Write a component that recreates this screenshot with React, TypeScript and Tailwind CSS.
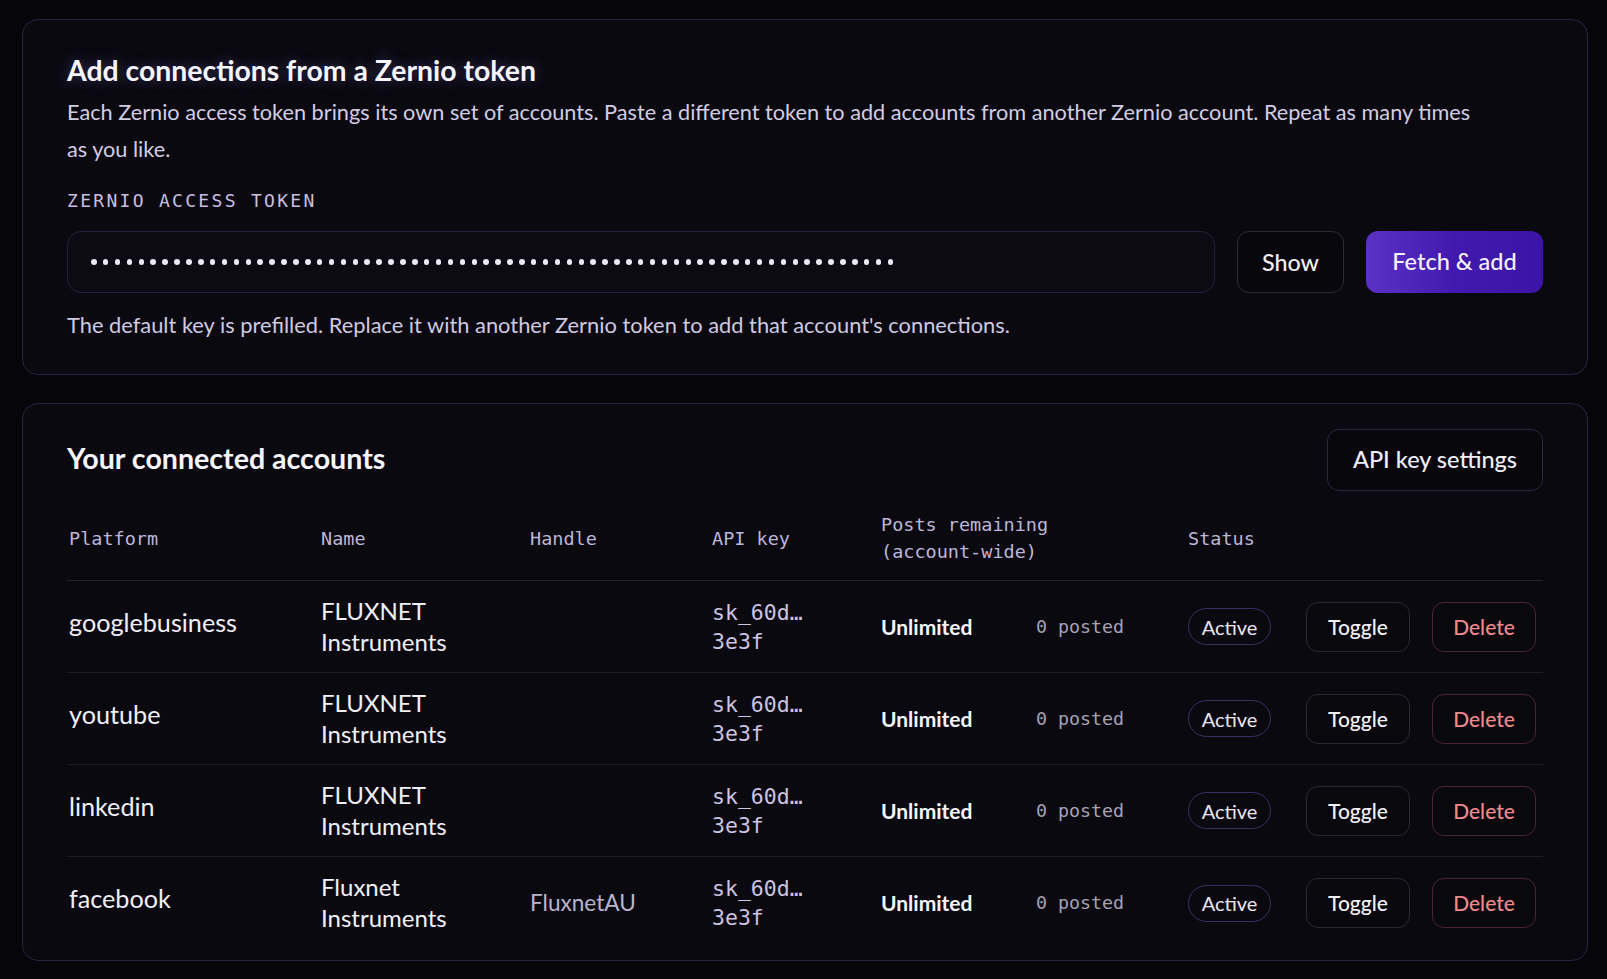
import React from "react";

const sans = "font-['Lato','Noto_Sans',sans-serif]";
const mono = "font-['DejaVu_Sans_Mono','Liberation_Mono',monospace]";

type Account = {
  platform: string;
  name: [string, string];
  handle: string;
};

const accounts: Account[] = [
  { platform: "googlebusiness", name: ["FLUXNET", "Instruments"], handle: "" },
  { platform: "youtube", name: ["FLUXNET", "Instruments"], handle: "" },
  { platform: "linkedin", name: ["FLUXNET", "Instruments"], handle: "" },
  { platform: "facebook", name: ["Fluxnet", "Instruments"], handle: "FluxnetAU" },
];

const cols = "grid grid-cols-[254px_209px_182px_169px_307px_118px_1fr]";

function MaskedToken() {
  return (
    <div className="flex items-center gap-[6.4px]">
      {Array.from({ length: 68 }).map((_, i) => (
        <span key={i} className="block h-[5.5px] w-[5.5px] rounded-full bg-[#ece9f4]" />
      ))}
    </div>
  );
}

function Row({ a, last }: { a: Account; last: boolean }) {
  return (
    <div
      className={`${cols} h-[92px] items-center ${last ? "" : "border-b border-[#1e1c27]"}`}
    >
      <div className={`${sans} mb-[8px] pl-[2px] text-[25.2px] text-[#f1eff7]`}>{a.platform}</div>
      <div className={`${sans} text-[24px] leading-[30.7px] text-[#f1eff7]`}>
        <div>{a.name[0]}</div>
        <div>{a.name[1]}</div>
      </div>
      <div className={`${sans} text-[22.6px] text-[#b9b4cc]`}>{a.handle}</div>
      <div className={`${mono} pt-[2px] text-[21.5px] leading-[28.7px] text-[#cbc4e2]`}>
        <div>sk_60d…</div>
        <div>3e3f</div>
      </div>
      <div className="flex items-center">
        <span className={`${sans} w-[155px] text-[21px] font-bold text-[#f7f6fb]`}>Unlimited</span>
        <span className={`${mono} text-[18.3px] text-[#a6a2b6]`}>0 posted</span>
      </div>
      <div>
        <span
          className={`${sans} inline-flex h-[37px] w-[83px] items-center justify-center rounded-full border border-[#3b3060] text-[20px] text-[#e9e6f3]`}
        >
          Active
        </span>
      </div>
      <div className="flex justify-end gap-[22px] pr-[8px]">
        <button
          className={`${sans} h-[50px] w-[104px] rounded-[12px] border border-[#2b2836] bg-[#09080d] text-[21px] font-medium text-[#f3f1f8]`}
        >
          Toggle
        </button>
        <button
          className={`${sans} h-[50px] w-[104px] rounded-[12px] border border-[#4a2532] bg-[#09080d] text-[21px] font-medium text-[#f08a8c]`}
        >
          Delete
        </button>
      </div>
    </div>
  );
}

export default function App() {
  return (
    <div className="min-h-[979px] w-full bg-[#060509] pl-[22px] pr-[19px] pt-[19px]">
      {/* token import card */}
      <section className="rounded-[16px] border border-[#2a2340] bg-[#0a0910] px-[44px] pt-[32px] pb-[34px]">
        <h1
          className={`${sans} text-[28.4px] font-bold leading-[36px] text-[#f7f5ff] [text-shadow:0_0_14px_rgba(170,140,255,0.35)]`}
        >
          Add connections from a Zernio token
        </h1>
        <p className={`${sans} mt-[6px] max-w-[1420px] text-[21.7px] leading-[37px] text-[#d2cde3]`}>
          Each Zernio access token brings its own set of accounts. Paste a different token to add
          accounts from another Zernio account. Repeat as many times as you like.
        </p>
        <div className={`${mono} mt-[21px] text-[18px] leading-[24px] tracking-[2.3px] text-[#c6bfe0]`}>
          ZERNIO ACCESS TOKEN
        </div>
        <div className="mt-[18px] flex h-[62px] items-center gap-[22px]">
          <div className="flex h-full flex-1 items-center rounded-[14px] border border-[#25203a] bg-[#0c0b13] pl-[23px]">
            <MaskedToken />
          </div>
          <button
            className={`${sans} h-full w-[107px] rounded-[12px] border border-[#2d2a37] bg-[#08070c] text-[23.3px] font-medium text-[#f3f1f8]`}
          >
            Show
          </button>
          <button
            className={`${sans} h-full w-[177px] rounded-[12px] bg-gradient-to-r from-[#5a31c4] via-[#4219ae] to-[#3b14a6] text-[23.5px] font-medium text-[#f4f1ff]`}
          >
            Fetch &amp; add
          </button>
        </div>
        <p className={`${sans} mt-[17px] text-[21.85px] leading-[30px] text-[#cfc9e1]`}>
          The default key is prefilled. Replace it with another Zernio token to add that account's
          connections.
        </p>
      </section>

      {/* connected accounts card */}
      <section className="mt-[28px] rounded-[16px] border border-[#2a2340] bg-[#0a0910] px-[44px] pt-[25px] pb-[11px]">
        <div className="flex h-[62px] items-center justify-between">
          <h2 className={`${sans} mb-[3px] text-[28.6px] font-bold text-[#f7f5ff]`}>
            Your connected accounts
          </h2>
          <button
            className={`${sans} h-[62px] w-[216px] rounded-[12px] border border-[#2c2644] bg-[#08070c] text-[23.5px] font-medium text-[#f0eef8]`}
          >
            API key settings
          </button>
        </div>

        <div className="mt-[4px]">
          <div
            className={`${cols} h-[86px] items-center border-b border-[#23212d] ${mono} pt-[3px] text-[18.5px] leading-[26.7px] text-[#bdb6d8]`}
          >
            <div className="pl-[2px]">Platform</div>
            <div>Name</div>
            <div>Handle</div>
            <div>API key</div>
            <div>
              <div>Posts remaining</div>
              <div>(account-wide)</div>
            </div>
            <div>Status</div>
            <div />
          </div>
          {accounts.map((a, i) => (
            <Row key={a.platform} a={a} last={i === accounts.length - 1} />
          ))}
        </div>
      </section>
    </div>
  );
}
